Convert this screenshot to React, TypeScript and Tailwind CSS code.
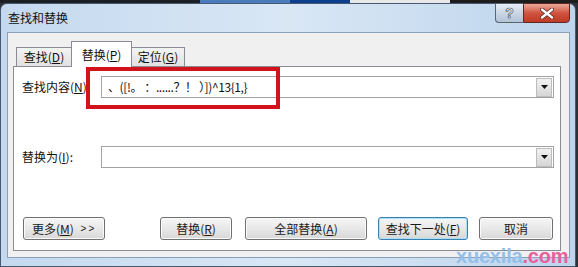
import React from "react";

const font = { fontFamily: '"Noto Sans CJK SC", "Liberation Sans", sans-serif' };

function Btn({ children, width, focused, className }: { children: React.ReactNode; width: string; focused?: boolean; className?: string }) {
    return (
        <div
            className={
                "flex h-[23px] items-center justify-center rounded-[3px] border bg-gradient-to-b from-[#f6f6f6] via-[#e8e8e8] to-[#d8d8d8] text-[12px] text-[#1a1a1a] " +
                width + " " +
                (focused ? "border-[#3c7fb1] shadow-[inset_0_0_0_1px_#a8e0f8]" : "border-[#707070] shadow-[inset_0_0_0_1px_#fbfbfb]") +
                " " + (className || "")
            }
        >
            {children}
        </div>
    );
}

function Combo({ text }: { text?: string }) {
    return (
        <div className="flex h-[22px] w-[453px] items-center border border-[#a3a3a3] bg-white">
            <div className="flex-1 truncate pl-[6px] text-[12px] leading-[20px] tracking-[-0.4px] text-[#111]">{text}</div>
            <div className="mr-px flex h-[19px] w-[16px] items-center justify-center border border-[#bcbcbc] bg-gradient-to-b from-[#f2f2f2] to-[#d6d6d6]">
                <svg width="7" height="4" viewBox="0 0 7 4"><path d="M0 0h7L3.5 4z" fill="#111" /></svg>
            </div>
        </div>
    );
}

export default function App() {
    return (
        <div className="relative h-[267px] w-[578px] overflow-hidden bg-[#2c3138]" style={font}>
            {/* window behind: thin strip */}
            <div className="flex h-[3px]">
                <div className="w-[200px] bg-[#1b1e22]" />
                <div className="w-[90px] bg-[#4a7bbd]" />
                <div className="w-[60px] bg-[#0c3e8e]" />
                <div className="w-[100px] bg-[#e8e8e8]" />
                <div className="flex-1 bg-[#1d1d1d]" />
            </div>

            {/* dialog window */}
            <div className="h-[264px] w-[576px] rounded-t-[7px] border border-[#4a5a6e] bg-gradient-to-r from-[#c4d9ef] via-[#d9e7f5] to-[#bdd4ec]">
                {/* title bar */}
                <div className="flex h-[28px] items-start">
                    <span className="ml-[7px] mt-[6px] text-[12px] leading-[16px] text-[#111]">查找和替换</span>
                    <div className="ml-auto mr-[5px] -mt-px flex">
                        <div className="flex h-[20px] w-[28px] items-center justify-center rounded-bl-[4px] border border-r-0 border-[#56657a] bg-gradient-to-b from-[#e6eef7] via-[#c9d6e4] to-[#b4c4d6]">
                            <span className="text-[14px] font-bold leading-none text-white [-webkit-text-stroke:0.6px_#3b4656]" style={{ fontFamily: '"Liberation Sans", sans-serif' }}>?</span>
                        </div>
                        <div className="flex h-[20px] w-[47px] items-center justify-center rounded-br-[4px] border border-[#5b2a24] bg-gradient-to-b from-[#e9a99b] via-[#d0533f] to-[#c03a26]">
                            <svg width="14" height="11" viewBox="0 0 14 11">
                                <path d="M2 1.5l10 8M12 1.5l-10 8" stroke="#5a2a20" strokeWidth="4" strokeLinecap="round" />
                                <path d="M2 1.5l10 8M12 1.5l-10 8" stroke="#fff" strokeWidth="2.4" strokeLinecap="round" />
                            </svg>
                        </div>
                    </div>
                </div>

                {/* client area */}
                <div className="ml-[6px] h-[226px] w-[563px] border border-[#8aa0b8] bg-[#f0f0f0]">
                    {/* tabs */}
                    <div className="relative z-10 -mb-px flex h-[34px] items-end pl-[8px] text-[12px] text-[#111]">
                        <div className="flex h-[20px] w-[56px] items-center justify-center border border-[#898c95] bg-gradient-to-b from-[#f3f3f3] to-[#e2e2e2]">
                            查找(<u>D</u>)
                        </div>
                        <div className="-ml-px flex h-[26px] w-[61px] items-start justify-center border border-b-0 border-[#898c95] bg-white pt-[4px]">
                            替换(<u>P</u>)
                        </div>
                        <div className="-ml-px flex h-[20px] w-[54px] items-center justify-center border border-[#898c95] bg-gradient-to-b from-[#f3f3f3] to-[#e2e2e2]">
                            定位(<u>G</u>)
                        </div>
                    </div>

                    {/* tab page */}
                    <div className="relative ml-[5px] h-[185px] w-[548px] border border-[#898c95] bg-white text-[12px] text-[#111]">
                        <div className="flex items-center pl-[8px] pt-[9px]">
                            <span className="w-[79px]">查找内容(<u>N</u>):</span>
                            <Combo text="、([!。 ：......？！ ）])^13{1,}" />
                        </div>
                        <div className="mt-[48px] flex items-center pl-[8px]">
                            <span className="w-[79px]">替换为(<u>I</u>):</span>
                            <Combo />
                        </div>
                        <div className="mt-[49px] flex pl-[9px]">
                            <Btn width="w-[82px]" className="justify-start pl-[8px]">
                                更多(<u>M</u>)&nbsp;<span className="ml-[4px] text-[10px] tracking-[2px]" style={{ fontFamily: '"Liberation Sans", sans-serif' }}>&gt;&gt;</span>
                            </Btn>
                            <Btn width="w-[72px]" className="ml-[55px]">替换(<u>R</u>)</Btn>
                            <Btn width="w-[122px]" className="ml-[13px]">全部替换(<u>A</u>)</Btn>
                            <Btn width="w-[90px]" className="ml-[11px]" focused>查找下一处(<u>F</u>)</Btn>
                            <Btn width="w-[74px]" className="ml-[11px]">取消</Btn>
                        </div>

                        {/* red annotation box */}
                        <div className="absolute left-[72px] top-0 h-[42px] w-[194px] border-[4px] border-[#d3131b]" />
                    </div>
                </div>
            </div>

            {/* watermark */}
            <div className="absolute left-[456px] top-[245px] text-[20px] font-bold leading-[22px] tracking-[-0.2px]" style={{ fontFamily: '"Liberation Sans", sans-serif' }}>
                <span className="text-[#94bfe8]">xuexila</span>
                <span className="text-[#e8609c]">.com</span>
            </div>
        </div>
    );
}
